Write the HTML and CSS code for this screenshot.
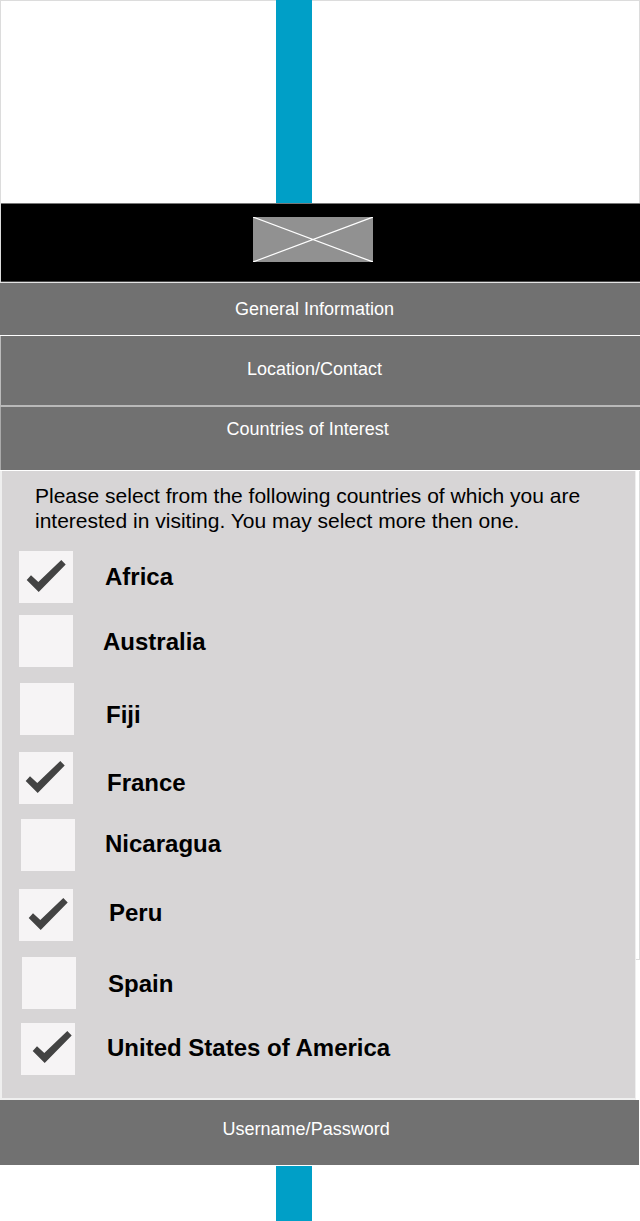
FILE: index.html
```html
<!DOCTYPE html>
<html lang="en">
<head>
<meta charset="utf-8">
<title>Registration</title>
<link rel="stylesheet" href="styles.css">
</head>
<body>
<svg class="symbols" width="0" height="0"><symbol id="check" viewBox="0 0 40 32"><path d="M.7 20 5 15.3 12.3 22 35.3 0 39.7 4.6 12.7 32Z" fill="#434343"/></symbol></svg>
<main class="page">
  <div class="top"><div class="stripe"></div></div>
  <header class="header">
    <svg class="logo" viewBox="0 0 120 45"><rect width="120" height="45" fill="#919191"/><path d="M0 0 120 45M0 45 120 0" stroke="#fff" stroke-width="1.2"/></svg>
  </header>
  <div class="section general"><span>General Information</span></div>
  <div class="section location"><span>Location/Contact</span></div>
  <div class="section countries"><span>Countries of Interest</span></div>
  <section class="panel">
    <p class="intro">Please select from the following countries of which you are<br>interested in visiting. You may select more then one.</p>
    <div class="row africa"><div class="box"><svg class="check"><use href="#check"/></svg></div><span class="label">Africa</span></div>
    <div class="row australia"><div class="box"></div><span class="label">Australia</span></div>
    <div class="row fiji"><div class="box"></div><span class="label">Fiji</span></div>
    <div class="row france"><div class="box"><svg class="check"><use href="#check"/></svg></div><span class="label">France</span></div>
    <div class="row nicaragua"><div class="box"></div><span class="label">Nicaragua</span></div>
    <div class="row peru"><div class="box"><svg class="check"><use href="#check"/></svg></div><span class="label">Peru</span></div>
    <div class="row spain"><div class="box"></div><span class="label">Spain</span></div>
    <div class="row usa"><div class="box"><svg class="check"><use href="#check"/></svg></div><span class="label">United States of America</span></div>
  </section>
  <div class="section account"><span>Username/Password</span></div>
  <div class="bottom"><div class="stripe"></div></div>
</main>
</body>
</html>
```
FILE: styles.css
```css
* { box-sizing: border-box; }
body { margin: 0; background: #fff; font-family: "Liberation Sans", Arial, sans-serif; }
.symbols { display: none; }
.page {
  width: 640px;
  height: 1221px;
  display: flex;
  flex-direction: column;
  background:
    linear-gradient(#dcdcdc, #dcdcdc) 0 0 / 640px 1px no-repeat,
    linear-gradient(#dcdcdc, #dcdcdc) 0 0 / 1px 960px no-repeat,
    linear-gradient(#dcdcdc, #dcdcdc) 639px 0 / 1px 960px no-repeat,
    linear-gradient(#dcdcdc, #dcdcdc) 0 959px / 640px 1px no-repeat,
    #fff;
}
.stripe { width: 36px; height: 100%; margin-left: 276px; background: #009fc7; }
.top { height: 203px; }
.header {
  height: 79px;
  margin-left: 1px;
  padding: 13px 0 0 252px;
  background: #000;
  border-top: 1px solid #777;
  border-bottom: 1px solid #484848;
}
.logo { display: block; width: 120px; height: 45px; }
.section { color: #fff; font-size: 18px; line-height: 20px; background: #717171; white-space: nowrap; }
.section span { display: block; }
.general { height: 54px; border-top: 1px solid #e4e4e4; border-bottom: 1px solid #fff; padding: 16px 0 0 235px; }
.location { height: 69px; border-left: 1px solid #bbb; padding: 23px 0 0 246px; }
.countries { height: 66px; border-top: 2px solid #b9b9b9; border-bottom: 1px solid #fff; padding: 12px 0 0 226.6px; }
.countries { box-shadow: inset 1px 0 #aaa; }
.panel {
  height: 629px;
  width: 636px;
  padding: 12px 0 0 17px;
  background: #d7d5d6;
  border: solid #efefef;
  border-width: 0 1px 2px 2px;
}
.intro { margin: 0 0 18px 16px; height: 50px; font-size: 21px; line-height: 25px; white-space: nowrap; color: #000; }
.row { display: flex; height: 52px; flex: none; }
.box { width: 54px; height: 52px; background: #f6f4f5; flex: none; padding: 9px 0 0 7px; }
.check { display: block; width: 40px; height: 32px; }
.label { font-size: 24px; font-weight: bold; line-height: 28px; white-space: nowrap; color: #000; }
.africa .label { margin: 12px 0 0 32px; }
.australia { margin-top: 12px; }
.australia .label { margin: 13px 0 0 30px; }
.fiji { margin: 16px 0 0 1px; }
.fiji .label { margin: 18px 0 0 32px; }
.france { margin-top: 17px; }
.france .box { padding-left: 6px; }
.france .label { margin: 17px 0 0 34px; }
.nicaragua { margin: 15px 0 0 2px; }
.nicaragua .label { margin: 11px 0 0 30px; }
.peru { margin-top: 18px; }
.peru .box { padding-left: 9px; }
.peru .label { margin: 10px 0 0 36px; }
.spain { margin: 16px 0 0 3px; }
.spain .label { margin: 13px 0 0 32px; }
.usa { margin: 14px 0 0 2px; }
.usa .box { padding: 8px 0 0 11px; }
.usa .label { margin: 11px 0 0 32px; }
.account { width: 639px; height: 65px; padding: 19px 0 0 222.6px; }
.bottom { height: 56px; padding-top: 1px; }
```
